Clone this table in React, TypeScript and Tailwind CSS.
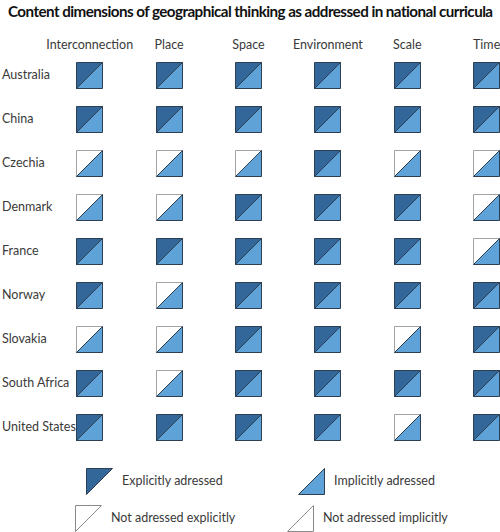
const columns = ["Interconnection", "Place", "Space", "Environment", "Scale", "Time"];

// 1 = explicitly addressed (dark top), 0 = not; every cell is implicitly addressed
const rows: [string, number[]][] = [
  ["Australia", [1, 1, 1, 1, 1, 1]],
  ["China", [1, 1, 1, 1, 1, 1]],
  ["Czechia", [0, 0, 0, 1, 0, 0]],
  ["Denmark", [0, 0, 1, 1, 1, 0]],
  ["France", [1, 1, 1, 1, 1, 0]],
  ["Norway", [1, 0, 1, 1, 1, 1]],
  ["Slovakia", [0, 0, 1, 1, 0, 1]],
  ["South Africa", [1, 0, 1, 1, 1, 1]],
  ["United States", [1, 1, 1, 1, 0, 1]],
];

const DARK = "#346799";
const LIGHT = "#5ea2d8";
const EDGE = "#2f3f52";
const GREY = "#a3a3a3";

const Cell = ({ explicit }: { explicit: boolean }) => (
  <svg width="27" height="27" viewBox="0 0 27 27" className="block">
    <polygon
      points="0.5,0.5 26.5,0.5 0.5,26.5"
      fill={explicit ? DARK : "#ffffff"}
      stroke={explicit ? EDGE : GREY}
      strokeWidth="1"
    />
    <polygon points="26.5,0.5 26.5,26.5 0.5,26.5" fill={LIGHT} stroke={EDGE} strokeWidth="1" />
  </svg>
);

const Tri = ({ kind }: { kind: "exp" | "imp" | "notExp" | "notImp" }) => {
  const top = kind === "exp" || kind === "notExp";
  const filled = kind === "exp" || kind === "imp";
  return (
    <svg width="27" height="27" viewBox="0 0 27 27" className="block shrink-0">
      <polygon
        points={top ? "0.5,0.5 26.5,0.5 0.5,26.5" : "26.5,0.5 26.5,26.5 0.5,26.5"}
        fill={filled ? (top ? DARK : LIGHT) : "#ffffff"}
        stroke={filled ? EDGE : "#8a8a8a"}
        strokeWidth="1"
      />
    </svg>
  );
};

const LegendItem = ({ kind, label }: { kind: "exp" | "imp" | "notExp" | "notImp"; label: string }) => (
  <div className="flex items-center gap-[9px]">
    <Tri kind={kind} />
    <span>{label}</span>
  </div>
);

export default function App() {
  return (
    <div
      className="w-[500px] h-[532px] overflow-hidden bg-white text-[#3a3a3a]"
      style={{ fontFamily: "Lato, 'Open Sans', sans-serif" }}
    >
      <h1 className="pt-[1px] pl-[8px] text-[15.2px] font-bold tracking-[-0.55px] text-[#111] whitespace-nowrap leading-[20px]">
        Content dimensions of geographical thinking as addressed in national curricula
      </h1>

      <div className="mt-[15px] grid grid-cols-[50px_repeat(6,79.4px)] text-[12.5px]">
        <div />
        {columns.map((c) => (
          <div key={c} className="flex justify-center whitespace-nowrap leading-[18px]">
            {c}
          </div>
        ))}
      </div>

      <div className="mt-[8px] flex flex-col gap-[17px]">
        {rows.map(([name, vals]) => (
          <div key={name} className="grid grid-cols-[50px_repeat(6,79.4px)] items-center text-[12.5px]">
            <div className="pl-[2px] whitespace-nowrap">{name}</div>
            {vals.map((v, i) => (
              <div key={i} className="flex justify-center">
                <Cell explicit={v === 1} />
              </div>
            ))}
          </div>
        ))}
      </div>

      <div className="mt-[27px] flex flex-col gap-[10px] text-[12.5px]">
        <div className="ml-[86px] grid grid-cols-[212px_auto]">
          <LegendItem kind="exp" label="Explicitly adressed" />
          <LegendItem kind="imp" label="Implicitly adressed" />
        </div>
        <div className="ml-[75px] grid grid-cols-[212px_auto]">
          <LegendItem kind="notExp" label="Not adressed explicitly" />
          <LegendItem kind="notImp" label="Not adressed implicitly" />
        </div>
      </div>
    </div>
  );
}
